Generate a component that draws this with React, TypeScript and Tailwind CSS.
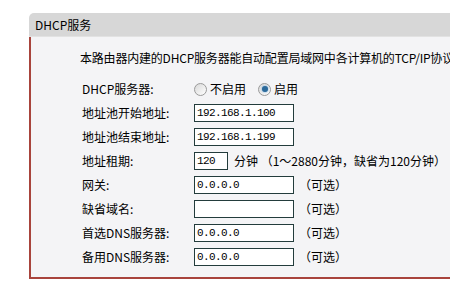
const font = "font-['SimSun','Noto_Sans_CJK_SC',sans-serif]";

function Radio({ checked }: { checked?: boolean }) {
  return (
    <span className="inline-flex w-[13px] h-[13px] rounded-full border border-[#9a9a9a] bg-gradient-to-br from-[#d9d9d9] to-[#ffffff] items-center justify-center">
      {checked && <span className="w-[6px] h-[6px] rounded-full bg-[#2d6a9a] shadow-[0_0_2px_#5fa0d8]" />}
    </span>
  );
}

function Field({ value, w = "w-[100px]" }: { value: string; w?: string }) {
  return (
    <div className={`${w} h-[18px] border border-[#233c3c] bg-white flex items-center pl-[2px] font-['Liberation_Mono',monospace] text-[11px] tracking-[-0.6px] text-black`}>
      {value}
    </div>
  );
}

function Row({ label, children }: { label: string; children: React.ReactNode }) {
  return (
    <div className="h-[24px] flex items-center">
      <div className="w-[112px] shrink-0">{label}</div>
      {children}
    </div>
  );
}

export default function App() {
  const optional = [
    { label: "网关:", value: "0.0.0.0" },
    { label: "缺省域名:", value: "" },
    { label: "首选DNS服务器:", value: "0.0.0.0" },
    { label: "备用DNS服务器:", value: "0.0.0.0" },
  ];

  return (
    <div className={`w-[450px] h-[281px] bg-white overflow-hidden pt-[13px] pl-[29px] text-[12px] leading-[14px] text-black ${font}`}>
      <div className="w-[430px] h-[24px] bg-[#d7d7d7] rounded-tl-[5px] border-b border-[#e2e2e2] pl-[6px] flex items-center">
        DHCP服务
      </div>
      <div className="w-[430px] bg-[#f4f4f6] border-l-2 border-b-2 border-[#a8443c] pb-[8px]">
        <div className="pt-[14px] pl-[49px] whitespace-nowrap tracking-[-0.2px]">
          本路由器内建的DHCP服务器能自动配置局域网中各计算机的TCP/IP协议
        </div>
        <div className="mt-[12px] pl-[51px]">
          <Row label="DHCP服务器:">
            <div className="flex items-center">
              <Radio />
              <span className="ml-[3px]">不启用</span>
              <span className="ml-[12px] flex items-center">
                <Radio checked />
              </span>
              <span className="ml-[3px]">启用</span>
            </div>
          </Row>
          <Row label="地址池开始地址:">
            <Field value="192.168.1.100" />
          </Row>
          <Row label="地址池结束地址:">
            <Field value="192.168.1.199" />
          </Row>
          <Row label="地址租期:">
            <Field value="120" w="w-[34px]" />
            <span className="ml-[6px] whitespace-nowrap">分钟 （1～2880分钟，缺省为120分钟）</span>
          </Row>
          {optional.map((o) => (
            <Row key={o.label} label={o.label}>
              <Field value={o.value} />
              <span className="ml-[5px]">（可选）</span>
            </Row>
          ))}
        </div>
      </div>
    </div>
  );
}
